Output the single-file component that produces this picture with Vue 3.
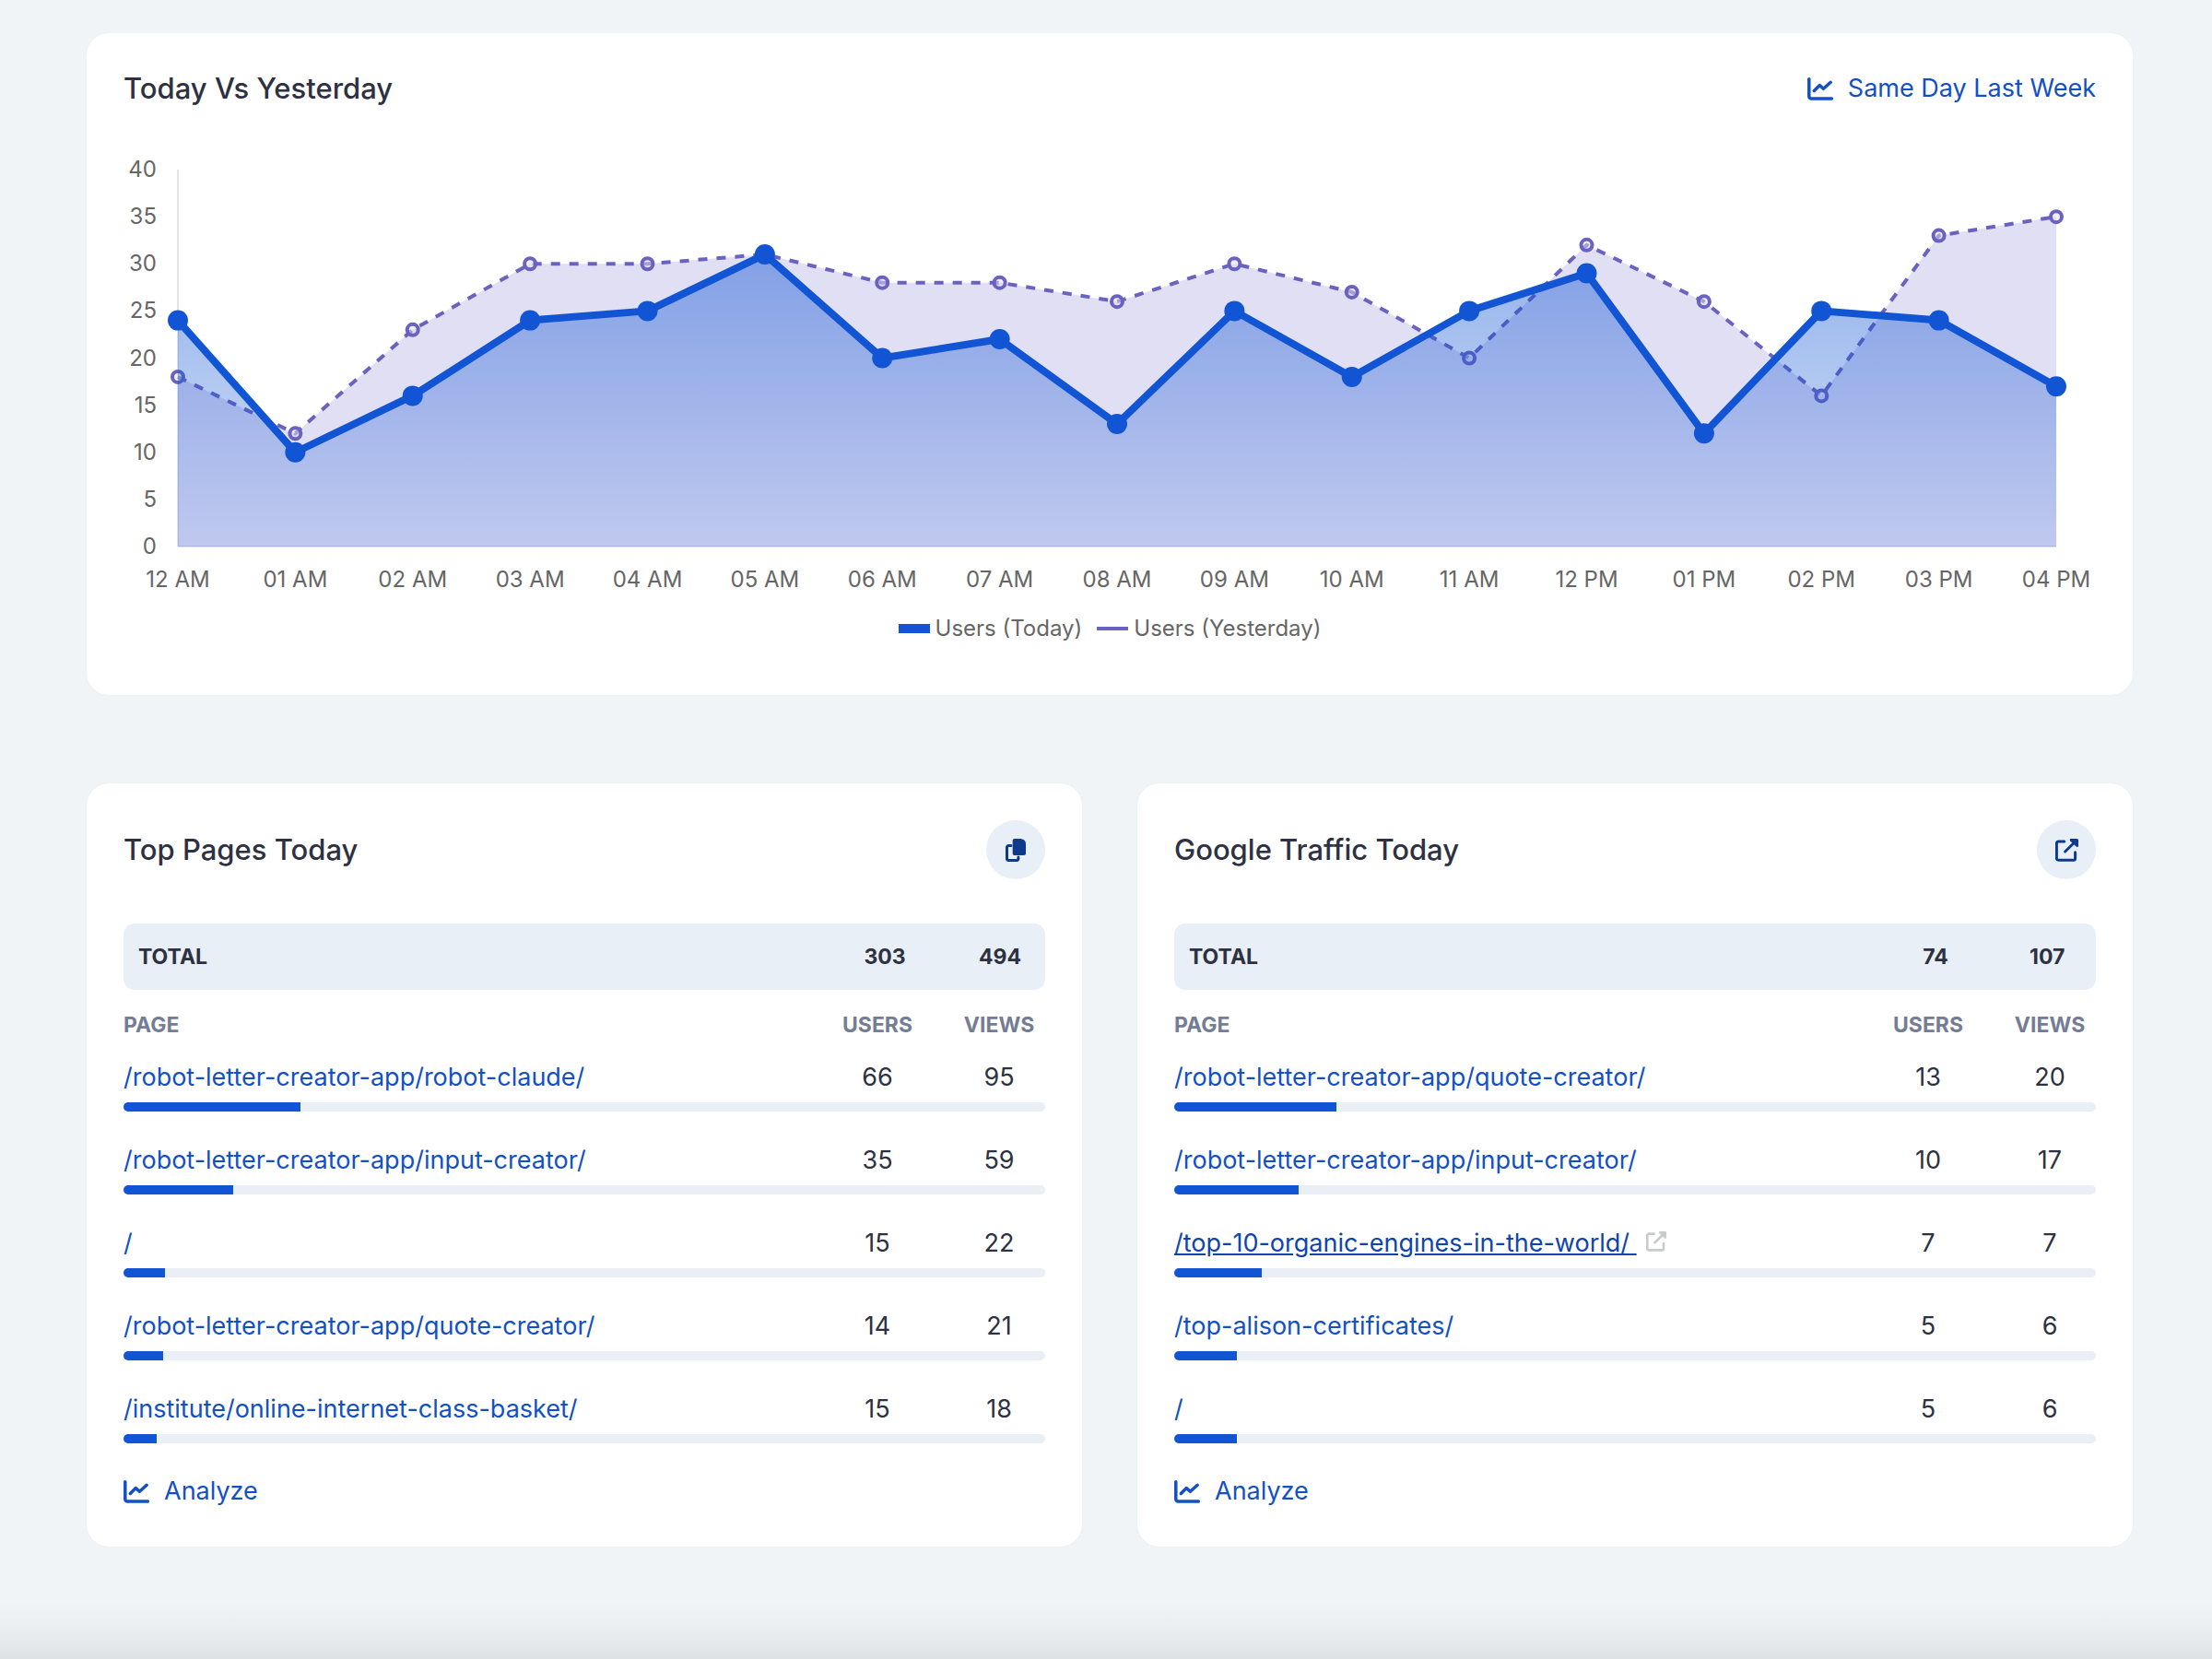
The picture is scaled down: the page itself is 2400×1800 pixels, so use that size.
<template>
    <main class="dashboard">
        <section class="card chart-card">
            <div class="card-header">
                <h2>Today Vs Yesterday</h2>
                <a href="#last-week" class="action">
                    <svg class="icon-chart" viewBox="0 0 28 25" aria-hidden="true">
                        <path d="M1.8 1.8V20.5a2.5 2.5 0 0 0 2.5 2.5H26.3" />
                        <path d="M7.3 14.5L13.3 8.6L17.4 12.3L25.2 5.3" />
                    </svg>
                    <span>Same Day Last Week</span>
                </a>
            </div>

            <svg class="chart" viewBox="0 0 2140 490" role="img" aria-label="Users per hour">
                <defs>
                    <linearGradient id="todayFill" gradientUnits="userSpaceOnUse" x1="0" :y1="plot.top" x2="0" :y2="plot.bottom">
                        <stop offset="0" stop-color="#1155d4" stop-opacity="0.54" />
                        <stop offset="1" stop-color="#1155d4" stop-opacity="0.16" />
                    </linearGradient>
                </defs>

                <line class="axis" :x1="plot.left" :y1="plot.top" :x2="plot.left" :y2="plot.bottom" />
                <line class="axis" :x1="plot.left" :y1="plot.bottom" :x2="plot.right" :y2="plot.bottom" />

                <text v-for="tick in ticks" :key="tick" class="tick" x="36" :y="yPos(tick) + 8" text-anchor="end">{{ tick }}</text>
                <text v-for="(hour, i) in hours" :key="hour" class="tick" :x="xPos(i)" y="477" text-anchor="middle">{{ hour }}</text>

                <polygon class="yesterday-area" :points="area(yesterday)" />
                <polyline class="yesterday-line" :points="line(yesterday)" />
                <circle v-for="(value, i) in yesterday" :key="'y' + i" class="yesterday-dot" :cx="xPos(i)" :cy="yPos(value)" r="6" />

                <polygon fill="url(#todayFill)" :points="area(today)" />
                <polyline class="today-line" :points="line(today)" />
                <circle v-for="(value, i) in today" :key="'t' + i" class="today-dot" :cx="xPos(i)" :cy="yPos(value)" r="11" />
            </svg>

            <div class="legend">
                <span class="legend-item"><i class="swatch"></i>Users (Today)</span>
                <span class="legend-item"><i class="swatch swatch-thin"></i>Users (Yesterday)</span>
            </div>
        </section>

        <div class="columns">
            <section v-for="panel in panels" :key="panel.title" class="card">
                <div class="card-header panel-header">
                    <h2>{{ panel.title }}</h2>
                    <button type="button" class="round-button" :aria-label="panel.button">
                        <svg v-if="panel.icon === 'copy'" class="icon-copy" viewBox="0 0 22 25" aria-hidden="true">
                            <path class="solid" d="M9.7 0H16.5Q22 0.8 22 5.8V16a2 2 0 0 1-2 2H9.7a2 2 0 0 1-2-2V2a2 2 0 0 1 2-2z" />
                            <path d="M6 7.4H3.4a1.9 1.9 0 0 0-1.9 1.9V21.6a1.9 1.9 0 0 0 1.9 1.9H12a1.9 1.9 0 0 0 1.9-1.9V20" />
                        </svg>
                        <svg v-else class="icon-open" viewBox="0 0 25 25" aria-hidden="true">
                            <path d="M9.8 3H3.4a2 2 0 0 0-2 2V21.2a2 2 0 0 0 2 2H19.6a2 2 0 0 0 2-2V14.8" />
                            <path d="M10.6 14L20 4.8" />
                            <path class="solid" d="M16.4 0H23.5Q25 0 25 1.5V8.2Q24 9.7 22.6 8.6L16.2 2.4Q15 0.8 16.4 0z" />
                        </svg>
                    </button>
                </div>

                <div class="total">
                    <span>TOTAL</span>
                    <span class="total-users">{{ panel.users }}</span>
                    <span>{{ panel.views }}</span>
                </div>

                <table>
                    <thead>
                        <tr>
                            <th class="page">PAGE</th>
                            <th class="number">USERS</th>
                            <th class="spacer"></th>
                            <th class="number">VIEWS</th>
                        </tr>
                    </thead>
                    <tbody v-for="row in panel.rows" :key="row.page">
                        <tr>
                            <td class="page">
                                <a href="#page" :class="{ hovered: row.hovered }">{{ row.page }}<template v-if="row.hovered">&nbsp;</template></a>
                                <svg v-if="row.hovered" class="icon-open icon-small" viewBox="0 0 25 25" aria-hidden="true">
                                    <path d="M9.8 3H3.4a2 2 0 0 0-2 2V21.2a2 2 0 0 0 2 2H19.6a2 2 0 0 0 2-2V14.8" />
                                    <path d="M10.6 14L20 4.8" />
                                    <path class="solid" d="M16.4 0H23.5Q25 0 25 1.5V8.2Q24 9.7 22.6 8.6L16.2 2.4Q15 0.8 16.4 0z" />
                                </svg>
                            </td>
                            <td class="number">{{ row.users }}</td>
                            <td></td>
                            <td class="number">{{ row.views }}</td>
                        </tr>
                        <tr>
                            <td colspan="4" class="bar-cell">
                                <div class="bar">
                                    <div class="bar-fill" :style="{ width: share(panel, row) }"></div>
                                </div>
                            </td>
                        </tr>
                    </tbody>
                </table>

                <a href="#analyze" class="action analyze">
                    <svg class="icon-chart" viewBox="0 0 28 25" aria-hidden="true">
                        <path d="M1.8 1.8V20.5a2.5 2.5 0 0 0 2.5 2.5H26.3" />
                        <path d="M7.3 14.5L13.3 8.6L17.4 12.3L25.2 5.3" />
                    </svg>
                    <span>Analyze</span>
                </a>
            </section>
        </div>
    </main>
</template>

<script setup>
const plot = { left: 59, right: 2097, top: 24, bottom: 433 }
const ticks = [40, 35, 30, 25, 20, 15, 10, 5, 0]

const hours = [
    '12 AM', '01 AM', '02 AM', '03 AM', '04 AM', '05 AM', '06 AM', '07 AM', '08 AM',
    '09 AM', '10 AM', '11 AM', '12 PM', '01 PM', '02 PM', '03 PM', '04 PM'
]
const today = [24, 10, 16, 24, 25, 31, 20, 22, 13, 25, 18, 25, 29, 12, 25, 24, 17]
const yesterday = [18, 12, 23, 30, 30, 31, 28, 28, 26, 30, 27, 20, 32, 26, 16, 33, 35]

const xPos = (i) => plot.left + (i * (plot.right - plot.left)) / (hours.length - 1)
const yPos = (value) => plot.bottom - (value * (plot.bottom - plot.top)) / 40

const line = (values) => values.map((value, i) => `${xPos(i)},${yPos(value)}`).join(' ')
const area = (values) => `${plot.left},${plot.bottom} ${line(values)} ${plot.right},${plot.bottom}`

const panels = [
    {
        title: 'Top Pages Today',
        icon: 'copy',
        button: 'Copy',
        users: 303,
        views: 494,
        barBy: 'views',
        rows: [
            { page: '/robot-letter-creator-app/robot-claude/', users: 66, views: 95 },
            { page: '/robot-letter-creator-app/input-creator/', users: 35, views: 59 },
            { page: '/', users: 15, views: 22 },
            { page: '/robot-letter-creator-app/quote-creator/', users: 14, views: 21 },
            { page: '/institute/online-internet-class-basket/', users: 15, views: 18 }
        ]
    },
    {
        title: 'Google Traffic Today',
        icon: 'open',
        button: 'Open',
        users: 74,
        views: 107,
        barBy: 'users',
        rows: [
            { page: '/robot-letter-creator-app/quote-creator/', users: 13, views: 20 },
            { page: '/robot-letter-creator-app/input-creator/', users: 10, views: 17 },
            { page: '/top-10-organic-engines-in-the-world/', users: 7, views: 7, hovered: true },
            { page: '/top-alison-certificates/', users: 5, views: 6 },
            { page: '/', users: 5, views: 6 }
        ]
    }
]

const share = (panel, row) => `${(row[panel.barBy] / panel[panel.barBy]) * 100}%`
</script>

<style>
body {
    margin: 0;
    background: #f0f4f7;
}
</style>

<style scoped>
.dashboard {
    box-sizing: border-box;
    min-height: 100vh;
    padding: 36px 86px 122px 94px;
    background: linear-gradient(to top, #dee1e4 0, #e9ecef 24px, #f0f4f7 64px);
    color: #2d3142;
    font-family: Inter, "Liberation Sans", sans-serif;
    font-size: 27px;
    line-height: 40px;
}

.card {
    padding: 40px;
    border-radius: 24px;
    background: #fff;
    box-shadow: 0 0 2px rgba(45, 60, 90, 0.06);
}

.chart-card {
    padding-bottom: 52px;
    margin-bottom: 96px;
}

.card-header {
    display: flex;
    align-items: center;
    justify-content: space-between;
}

.panel-header {
    height: 64px;
    margin-bottom: 48px;
}

h2 {
    margin: 0;
    font-size: 31px;
    font-weight: 500;
    line-height: 40px;
}

a {
    color: #1250c4;
    text-decoration: none;
}

.action {
    display: flex;
    align-items: center;
    gap: 16px;
}

svg path {
    fill: none;
    stroke: currentColor;
    stroke-linecap: round;
    stroke-linejoin: round;
}

svg path.solid {
    fill: currentColor;
    stroke: none;
}

.icon-chart {
    width: 28px;
    height: 25px;
    stroke-width: 3.5;
}

.icon-copy {
    width: 22px;
    height: 25px;
    stroke-width: 3;
}

.icon-open {
    width: 25px;
    height: 25px;
    stroke-width: 3;
}

.icon-small {
    width: 22px;
    height: 22px;
    margin-left: 10px;
    color: #c9cacc;
}

.chart {
    display: block;
    width: 100%;
    margin-top: 44px;
}

.axis {
    stroke: #e3e3e6;
    stroke-width: 2;
}

.tick {
    fill: #666;
    font-size: 24px;
}

.yesterday-area {
    fill: rgba(106, 95, 198, 0.2);
}

.yesterday-line {
    fill: none;
    stroke: #6a62c0;
    stroke-width: 4;
    stroke-dasharray: 10 10;
}

.yesterday-dot {
    fill: rgba(225, 222, 244, 0.5);
    stroke: #6a62c0;
    stroke-width: 4;
}

.today-line {
    fill: none;
    stroke: #1155d4;
    stroke-width: 8;
    stroke-linejoin: round;
}

.today-dot {
    fill: #1155d4;
}

.legend {
    display: flex;
    justify-content: center;
    gap: 16px;
    margin-top: 12px;
    color: #666;
    font-size: 24px;
}

.legend-item {
    display: flex;
    align-items: center;
    gap: 6px;
}

.swatch {
    width: 34px;
    height: 10px;
    background: #1155d4;
}

.swatch-thin {
    height: 4px;
    background: #6a62c0;
}

.columns {
    display: grid;
    grid-template-columns: 1fr 1fr;
    gap: 60px;
}

.round-button {
    display: flex;
    align-items: center;
    justify-content: center;
    width: 64px;
    height: 64px;
    padding: 0;
    border: 0;
    border-radius: 50%;
    background: #e9eff7;
    color: #0f3a8c;
    cursor: pointer;
}

.total {
    display: grid;
    grid-template-columns: 1fr 100px 56px;
    column-gap: 52px;
    align-items: center;
    height: 72px;
    padding: 0 16px;
    border-radius: 12px;
    background: #e9eff7;
    font-size: 23px;
    font-weight: 700;
}

.total-users {
    text-align: center;
}

table {
    width: 100%;
    margin-top: 18px;
    border-collapse: collapse;
    table-layout: fixed;
}

th {
    padding: 0;
    color: #747d94;
    font-size: 23px;
    font-weight: 700;
}

td {
    padding: 0;
}

.page {
    text-align: left;
    white-space: nowrap;
}

.number {
    width: 100px;
    text-align: center;
}

.spacer {
    width: 32px;
}

tbody td:not(.bar-cell) {
    padding-top: 17px;
}

.bar-cell {
    padding: 7px 0 16px;
}

.bar {
    height: 10px;
    overflow: hidden;
    border-radius: 5px;
    background: #e9eff5;
}

.bar-fill {
    height: 100%;
    background: #1155d4;
}

.analyze {
    width: max-content;
    margin-top: 16px;
}

.hovered {
    color: #0f45ab;
    text-decoration: underline;
}
</style>
